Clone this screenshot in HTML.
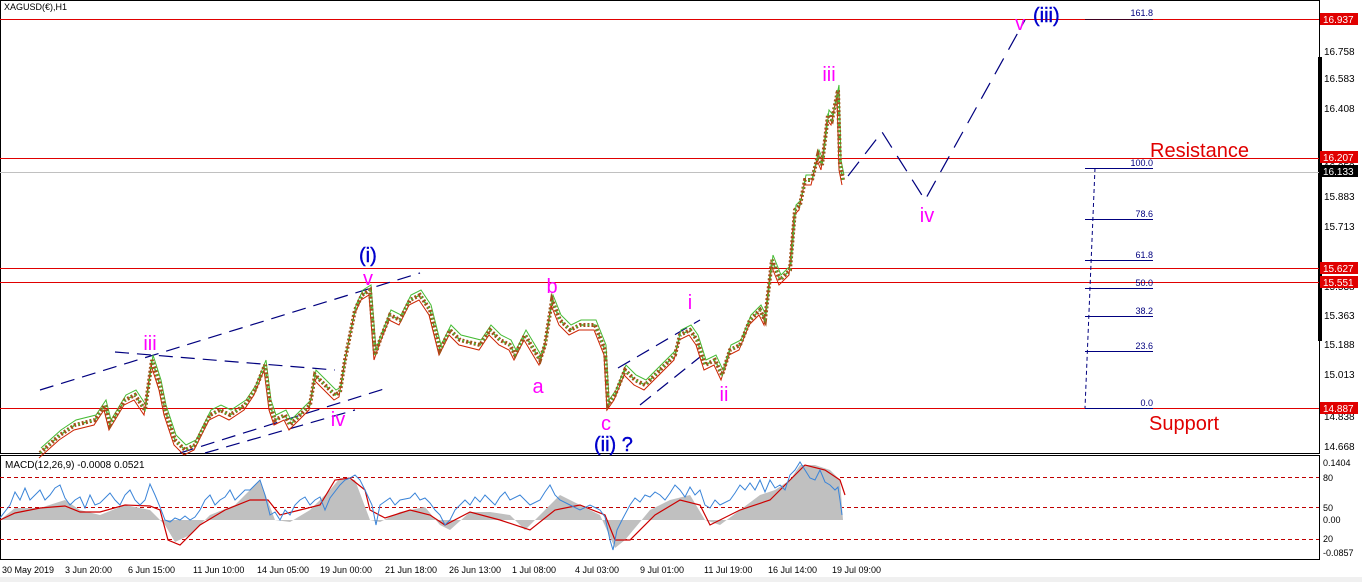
<!DOCTYPE html>
<html><head><meta charset="utf-8"><style>
body{margin:0;background:#fff;width:1362px;height:582px;overflow:hidden;font-family:"Liberation Sans",sans-serif}
svg{display:block}
</style></head><body>
<svg width="1362" height="582" viewBox="0 0 1362 582" xmlns="http://www.w3.org/2000/svg" font-family="Liberation Sans, sans-serif">
<defs>
<polyline id="pr" fill="none" points="40,453 60,435 75,425 95,420 105,405 110,425 125,400 135,395 145,410 152,360 160,385 165,410 175,440 185,450 195,445 210,415 220,410 230,415 245,405 255,390 265,365 270,405 275,420 285,415 290,425 300,415 310,405 315,375 325,385 335,395 340,392 345,360 350,335 355,310 362,295 370,290 375,355 380,340 390,315 400,320 410,300 420,295 430,310 440,350 450,330 460,340 480,345 490,330 500,340 510,345 515,355 525,335 540,360 545,345 552,300 560,320 570,330 580,325 595,325 605,350 608,405 615,395 625,370 635,380 645,385 655,375 665,365 675,355 680,335 690,330 697,340 705,365 715,360 722,375 730,350 740,345 750,320 760,310 765,320 772,260 780,280 790,270 795,210 800,205 805,180 812,180 818,155 822,165 828,115 832,120 838,90 840,165 843,180"/>
</defs>
<rect width="1362" height="582" fill="#fff"/>
<rect x="0" y="577" width="1362" height="5" fill="#f0f0f0"/>
<rect x="0.5" y="0.5" width="1319" height="453" fill="none" stroke="#000"/>
<rect x="0.5" y="455.5" width="1319" height="104" fill="none" stroke="#000"/>
<rect x="1318" y="57" width="4" height="284" fill="#000"/>
<text x="4" y="10" font-size="9" fill="#000">XAGUSD(€),H1</text>
<g stroke="#e00000" stroke-width="1">
<line x1="0" y1="19.5" x2="1319" y2="19.5"/>
<line x1="0" y1="158.5" x2="1319" y2="158.5"/>
<line x1="0" y1="268.5" x2="1319" y2="268.5"/>
<line x1="0" y1="282.5" x2="1319" y2="282.5"/>
<line x1="0" y1="408.5" x2="1319" y2="408.5"/>
</g>
<line x1="0" y1="172.5" x2="1319" y2="172.5" stroke="#c0c0c0"/>
<g font-size="10" fill="#000">
<text x="1324" y="55">16.758</text><text x="1324" y="82">16.583</text><text x="1324" y="112">16.408</text>
<text x="1324" y="170">16.058</text><text x="1324" y="200">15.883</text><text x="1324" y="230">15.713</text>
<text x="1324" y="290">15.538</text><text x="1324" y="319">15.363</text><text x="1324" y="348">15.188</text>
<text x="1324" y="378">15.013</text><text x="1324" y="420">14.838</text><text x="1324" y="450">14.668</text>
</g>
<g font-size="10" fill="#fff">
<rect x="1320" y="13" width="38" height="12" fill="#e00000"/><text x="1323" y="23">16.937</text>
<rect x="1320" y="151" width="38" height="12" fill="#e00000"/><text x="1323" y="161">16.207</text>
<rect x="1320" y="165" width="38" height="12" fill="#000"/><text x="1323" y="175">16.133</text>
<rect x="1320" y="262" width="38" height="12" fill="#e00000"/><text x="1323" y="272">15.627</text>
<rect x="1320" y="276" width="38" height="12" fill="#e00000"/><text x="1323" y="286">15.551</text>
<rect x="1320" y="402" width="38" height="12" fill="#e00000"/><text x="1323" y="412">14.887</text>
</g>
<g stroke="#00007f" stroke-width="1.2" stroke-dasharray="14,8" fill="none">
<polyline points="40,390 420,273"/>
<polyline points="115,352 335,370"/>
<polyline points="180,453 387,388"/>
<polyline points="205,453 355,410"/>
<polyline points="618,368 700,320"/>
<polyline points="640,405 700,357"/>
<polyline points="848,176 882,132 925,200 1025,20" stroke-dasharray="18,10"/>
</g>
<g stroke="#44bb33" stroke-width="1">
<use href="#pr" transform="translate(1,-5)"/>
<use href="#pr" transform="translate(-1,5)" stroke="#cc2200"/>
</g>
<use href="#pr" stroke="#a0521a" stroke-width="4" stroke-dasharray="2,2"/>
<use href="#pr" stroke="#44bb33" stroke-width="1.5" stroke-dasharray="2,4"/>
<g stroke="#00007f" fill="none">
<line x1="1095" y1="168" x2="1085" y2="408" stroke-dasharray="4,3"/>
<line x1="1085" y1="168.5" x2="1153" y2="168.5"/><line x1="1085" y1="219.5" x2="1153" y2="219.5"/>
<line x1="1085" y1="260.5" x2="1153" y2="260.5"/><line x1="1085" y1="288.5" x2="1153" y2="288.5"/>
<line x1="1085" y1="316.5" x2="1153" y2="316.5"/><line x1="1085" y1="351.5" x2="1153" y2="351.5"/>
<line x1="1085" y1="408.5" x2="1153" y2="408.5"/><line x1="1085" y1="19.5" x2="1153" y2="19.5" stroke="#400020"/>
</g>
<g font-size="9" fill="#00007f" text-anchor="end">
<text x="1153" y="16">161.8</text><text x="1153" y="166">100.0</text><text x="1153" y="217">78.6</text>
<text x="1153" y="258">61.8</text><text x="1153" y="286">50.0</text><text x="1153" y="314">38.2</text>
<text x="1153" y="349">23.6</text><text x="1153" y="406">0.0</text>
</g>
<g fill="#ff00ff" font-size="20" text-anchor="middle">
<text x="829" y="81">iii</text><text x="927" y="222">iv</text><text x="1020" y="30">v</text>
<text x="368" y="285">v</text><text x="150" y="350">iii</text><text x="338" y="426">iv</text>
<text x="552" y="293">b</text><text x="538" y="393">a</text><text x="606" y="430">c</text>
<text x="690" y="309">i</text><text x="724" y="401">ii</text>
</g>
<g fill="#0000cc" font-size="20" stroke="#0000cc" stroke-width="0.4">
<text x="1033" y="22">(iii)</text><text x="359" y="262">(i)</text><text x="594" y="451">(ii) ?</text>
</g>
<g fill="#e00000" font-size="20">
<text x="1150" y="157">Resistance</text><text x="1149" y="430">Support</text>
</g>
<text x="5" y="468" font-size="10" fill="#000">MACD(12,26,9) -0.0008 0.0521</text>
<g stroke="#c00000" stroke-dasharray="4,3"><line x1="0" y1="477.5" x2="1319" y2="477.5"/><line x1="0" y1="507.5" x2="1319" y2="507.5"/><line x1="0" y1="539.5" x2="1319" y2="539.5"/></g>
<polygon fill="#c0c0c0" points="0,520 15,508 40,508 65,500 80,510 100,515 125,505 150,510 165,525 175,542 190,535 210,515 235,505 260,480 275,520 290,522 310,510 330,490 340,478 355,480 370,520 380,522 400,512 425,507 440,525 450,530 470,512 490,512 510,515 525,530 545,510 560,495 580,505 600,515 615,548 625,540 650,510 670,500 690,495 705,520 720,525 740,510 760,495 775,490 790,480 800,465 815,465 830,470 840,480 843,520"/>
<polyline fill="none" stroke="#cc0000" stroke-width="1.2" points="0,520 15,513 40,508 65,506 80,512 100,512 125,505 150,506 160,510 168,540 180,545 200,525 225,510 250,500 268,500 280,515 300,510 320,505 335,480 350,478 365,490 370,510 385,518 410,510 430,515 445,525 470,512 500,520 530,530 555,510 580,505 605,515 615,540 630,540 655,515 680,500 700,505 710,525 740,510 770,500 790,480 805,465 825,470 840,480 845,495"/>
<polyline fill="none" stroke="#3a84d8" stroke-width="1" points="0,518 10,505 15,492 20,500 25,488 30,500 35,495 40,490 45,500 50,495 55,488 60,485 65,498 70,505 75,500 80,497 85,508 90,495 95,505 100,503 105,498 110,493 115,500 120,505 125,495 130,490 135,500 140,505 145,500 150,484 155,495 160,507 165,520 170,522 175,518 180,520 185,516 190,520 195,517 200,510 205,500 210,495 215,505 220,500 225,497 230,490 235,500 240,495 245,490 250,490 255,485 260,480 265,495 270,515 275,512 280,520 285,510 290,515 295,505 300,500 305,497 310,505 315,500 320,497 325,510 330,498 340,485 345,480 350,478 355,475 360,480 365,490 372,505 376,525 380,505 390,498 395,505 400,500 410,498 415,493 420,500 425,498 430,503 435,510 440,515 445,525 450,520 455,510 460,505 465,500 470,505 475,497 480,502 485,495 490,500 495,505 500,497 505,492 510,500 520,495 530,505 540,500 545,492 550,485 555,495 560,500 570,505 580,510 590,505 600,510 605,517 610,540 613,550 617,530 622,520 630,505 635,498 640,502 645,495 650,497 655,492 660,495 665,500 670,493 675,485 680,490 685,497 690,487 695,495 700,490 705,505 710,508 715,500 720,505 730,500 735,493 740,485 745,490 750,483 755,490 760,480 765,492 770,480 775,488 780,485 785,490 790,475 795,470 800,462 805,470 810,478 815,480 820,470 825,482 830,485 835,490 838,487 840,500 842,515"/>
<g font-size="9" fill="#000">
<text x="1323" y="466">0.1404</text><text x="1323" y="481">80</text><text x="1323" y="511">50</text>
<text x="1323" y="523">0.00</text><text x="1323" y="542">20</text><text x="1323" y="556">-0.0857</text>
</g>
<g font-size="9" fill="#000">
<text x="2" y="573">30 May 2019</text><text x="65" y="573">3 Jun 20:00</text><text x="128" y="573">6 Jun 15:00</text>
<text x="193" y="573">11 Jun 10:00</text><text x="257" y="573">14 Jun 05:00</text><text x="320" y="573">19 Jun 00:00</text>
<text x="385" y="573">21 Jun 18:00</text><text x="449" y="573">26 Jun 13:00</text><text x="512" y="573">1 Jul 08:00</text>
<text x="575" y="573">4 Jul 03:00</text><text x="640" y="573">9 Jul 01:00</text><text x="704" y="573">11 Jul 19:00</text>
<text x="768" y="573">16 Jul 14:00</text><text x="832" y="573">19 Jul 09:00</text>
</g>
</svg>
</body></html>
